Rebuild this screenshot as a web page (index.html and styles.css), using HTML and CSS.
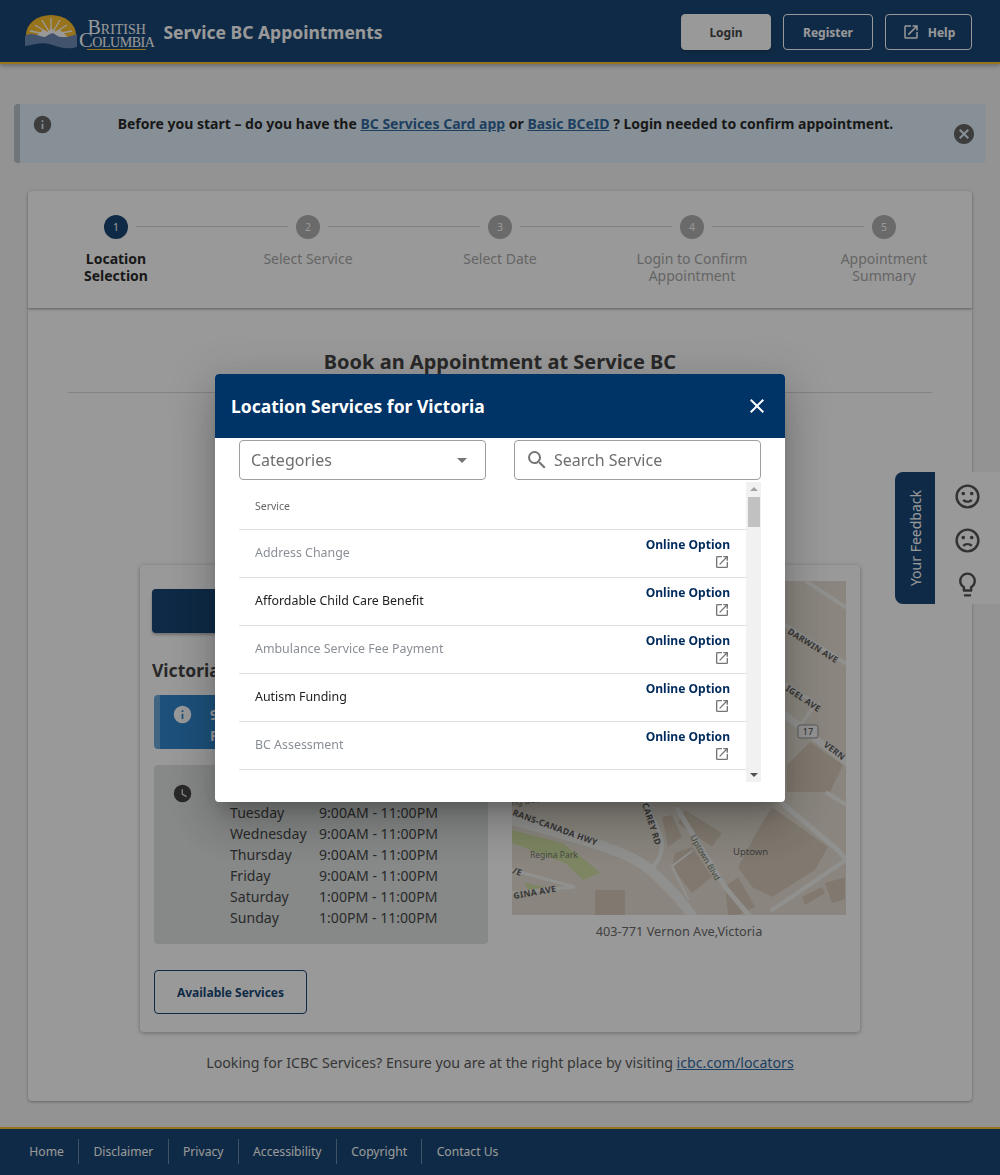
FILE: index.html
```html
<!DOCTYPE html>
<html lang="en">
<head>
  <meta charset="utf-8"/>
  <title>Service BC Appointments</title>
  <link rel="stylesheet" href="styles.css">
</head>
<body>

<svg class="defs" width="0" height="0">
  <symbol id="ext" viewBox="0 0 24 24"><path d="M14,3V5H17.59L7.76,14.83L9.17,16.24L19,6.41V10H21V3M19,19H5V5H12V3H5C3.89,3 3,3.9 3,5V19A2,2 0 0,0 5,21H19A2,2 0 0,0 21,19V12H19V19Z"/></symbol>
  <symbol id="info" viewBox="0 0 24 24"><path d="M13,9H11V7H13M13,17H11V11H13M12,2A10,10 0 0,0 2,12A10,10 0 0,0 12,22A10,10 0 0,0 22,12A10,10 0 0,0 12,2Z"/></symbol>
</svg>

<header class="topbar">
  <div class="logo">
    <svg class="logo-mark" width="52" height="34" viewBox="0 0 52 34">
      <path d="M1 20A25 20 0 0 1 51 20V24H1Z" fill="#fcba19"/>
      <g stroke="#fff" stroke-width="1.4">
        <path d="M26 20V3M26 20L17 5M26 20L35 5M26 20L10 10M26 20L42 10M26 20L5 16M26 20L47 16"/>
      </g>
      <path d="M10 22L18 15L23 17L26 13L31 17L35 15L43 22Z" fill="#fff"/>
      <path d="M0 21C8 16 14 22 20 22C24 20 27 16 31 20C36 24 44 22 52 19V32C42 35 34 32 24 29C16 27 8 30 0 31Z" fill="#5f7fae"/>
    </svg>
    <div class="logo-text">
      <span class="logo-line">British</span>
      <span class="logo-line logo-line-big">Columbia</span>
    </div>
  </div>
  <div class="app-title">Service BC Appointments</div>
  <nav class="top-actions">
    <button class="top-btn top-btn-fill">Login</button>
    <button class="top-btn">Register</button>
    <button class="top-btn top-btn-help">
      <svg class="icon" width="18" height="18"><use href="#ext"/></svg>
      Help
    </button>
  </nav>
</header>

<main class="page">
  <div class="notice">
    <svg class="icon notice-icon" width="21" height="21"><use href="#info"/></svg>
    <p class="notice-text">Before you start – do you have the <a href="#">BC Services Card app</a> or <a href="#">Basic BCeID</a> ? Login needed to confirm appointment.</p>
    <svg class="notice-close" width="24" height="24" viewBox="0 0 24 24"><path d="M12,2C17.53,2 22,6.47 22,12C22,17.53 17.53,22 12,22C6.47,22 2,17.53 2,12C2,6.47 6.47,2 12,2M15.59,7L12,10.59L8.41,7L7,8.41L10.59,12L7,15.59L8.41,17L12,13.41L15.59,17L17,15.59L13.41,12L17,8.41L15.59,7Z"/></svg>
  </div>

  <section class="stepper">
    <div class="step step-active"><span class="step-num">1</span><span class="step-label">Location Selection</span></div>
    <div class="step"><span class="step-num">2</span><span class="step-label">Select Service</span></div>
    <div class="step"><span class="step-num">3</span><span class="step-label">Select Date</span></div>
    <div class="step"><span class="step-num">4</span><span class="step-label">Login to Confirm Appointment</span></div>
    <div class="step step-last"><span class="step-num">5</span><span class="step-label">Appointment Summary</span></div>
  </section>

  <section class="content">
    <h1 class="page-title">Book an Appointment at Service BC</h1>
    <hr class="rule">

    <div class="location">
      <div class="location-left">
        <button class="select-btn"></button>
        <h2 class="location-name">Victoria</h2>
        <div class="status">
          <svg class="status-icon" width="21" height="21"><use href="#info"/></svg>
          <div class="status-text">9<br>P</div>
        </div>
        <div class="hours">
          <svg class="hours-icon" width="21" height="21" viewBox="0 0 24 24"><path d="M12,2A10,10 0 0,0 2,12A10,10 0 0,0 12,22A10,10 0 0,0 22,12A10,10 0 0,0 12,2M16.2,16.2L11,13V7H12.5V12.2L17,14.9L16.2,16.2Z"/></svg>
          <div class="hours-grid">
            <span>Monday</span><span>9:00AM - 11:00PM</span>
            <span>Tuesday</span><span>9:00AM - 11:00PM</span>
            <span>Wednesday</span><span>9:00AM - 11:00PM</span>
            <span>Thursday</span><span>9:00AM - 11:00PM</span>
            <span>Friday</span><span>9:00AM - 11:00PM</span>
            <span>Saturday</span><span>1:00PM - 11:00PM</span>
            <span>Sunday</span><span>1:00PM - 11:00PM</span>
          </div>
        </div>
        <button class="services-btn">Available Services</button>
      </div>
      <div class="location-right">
        <svg class="map" width="334" height="334" viewBox="0 0 334 334">
          <rect width="334" height="334" fill="#e3dccf"/>
          <g fill="#d2c4b2">
            <path d="M260 226L316 266L303 289L260 316L240 306L226 286L246 249Z"/>
            <path d="M173 229L210 252L200 266L166 242Z"/>
            <path d="M163 272L180 266L200 296L180 312L160 286Z"/>
            <path d="M213 306L226 296L243 326L226 334L216 334Z"/>
            <path d="M150 236L160 234L170 256L156 266Z"/>
            <path d="M83 309L113 309L113 334L83 334Z"/>
            <path d="M290 316L310 306L313 312L293 324Z"/>
            <path d="M313 302L333 296L333 318L320 322Z"/>
            <path d="M298 161L331 184L318 211L275 211L275 184Z"/>
          </g>
          <g fill="#cbdb9a">
            <path d="M0 249L50 262L73 279L88 292L71 299L53 282L26 272L0 262Z"/>
            <path d="M13 302L33 306L16 309Z"/>
          </g>
          <g fill="none" stroke="#eeeeec" stroke-linecap="round">
            <path d="M-4 238C40 250 70 258 93 266C115 274 130 280 146 296C160 310 172 322 182 338" stroke-width="10"/>
            <path d="M133 222C140 236 148 248 150 262C150 274 146 282 136 290" stroke-width="4"/>
            <path d="M166 229L213 306L240 338" stroke-width="5"/>
            <path d="M270 222L326 269L338 284" stroke-width="5"/>
            <path d="M334 279L260 329" stroke-width="4"/>
            <path d="M295 1L338 29" stroke-width="4"/>
            <path d="M273 44L338 85" stroke-width="4"/>
            <path d="M273 134L338 184" stroke-width="7"/>
            <path d="M303 124L290 142" stroke-width="3"/>
            <path d="M272 102L306 124" stroke-width="3"/>
            <path d="M315 212L338 226" stroke-width="4"/>
            <path d="M0 289L63 306L0 312" stroke-width="3"/>
            <path d="M180 270L160 285L176 318" stroke-width="2"/>
          </g>
          <g class="map-label">
            <text transform="translate(275 52) rotate(32)">DARWIN AVE</text>
            <text transform="translate(273 109) rotate(34)">IGEL AVE</text>
            <text transform="translate(311 165) rotate(37)">VERN</text>
            <text transform="translate(0 234) rotate(20)">RANS-CANADA HWY</text>
            <text transform="translate(130 223) rotate(72)">CAREY RD</text>
            <text transform="translate(2 318) rotate(-10)">GINA AVE</text>
            <text transform="translate(0 292) rotate(20)">/E</text>
          </g>
          <g class="map-place">
            <text x="18" y="277">Regina Park</text>
            <text x="221" y="274" class="map-place-big">Uptown</text>
            <text transform="translate(178 256) rotate(60)">Uptown Blvd</text>
            <text transform="translate(0 225) rotate(-8)">ng Goose Regional</text>
          </g>
          <rect x="286" y="144" width="20" height="13" rx="2" fill="#f4f4f4" stroke="#888"/>
          <text x="296" y="154" class="map-shield">17</text>
        </svg>
        <p class="address">403-771 Vernon Ave,Victoria</p>
      </div>
    </div>

    <p class="icbc">Looking for ICBC Services? Ensure you are at the right place by visiting <a href="#">icbc.com/locators</a></p>
  </section>
</main>

<footer class="footer">
  <a href="#">Home</a>
  <a href="#">Disclaimer</a>
  <a href="#">Privacy</a>
  <a href="#">Accessibility</a>
  <a href="#">Copyright</a>
  <a href="#">Contact Us</a>
</footer>

<aside class="feedback">
  <div class="feedback-tab"><span>Your Feedback</span></div>
  <div class="feedback-icons">
    <svg width="29" height="29" viewBox="0 0 24 24"><path d="M20,12A8,8 0 0,0 12,4A8,8 0 0,0 4,12A8,8 0 0,0 12,20A8,8 0 0,0 20,12M22,12A10,10 0 0,1 12,22A10,10 0 0,1 2,12A10,10 0 0,1 12,2A10,10 0 0,1 22,12M10,9.5C10,10.3 9.3,11 8.5,11C7.7,11 7,10.3 7,9.5C7,8.7 7.7,8 8.5,8C9.3,8 10,8.7 10,9.5M17,9.5C17,10.3 16.3,11 15.5,11C14.7,11 14,10.3 14,9.5C14,8.7 14.7,8 15.5,8C16.3,8 17,8.7 17,9.5M12,17.23C10.25,17.23 8.71,16.5 7.81,15.42L9.23,14C9.68,14.72 10.75,15.23 12,15.23C13.25,15.23 14.32,14.72 14.77,14L16.19,15.42C15.29,16.5 13.75,17.23 12,17.23Z"/></svg>
    <svg width="29" height="29" viewBox="0 0 24 24"><path d="M20,12A8,8 0 0,0 12,4A8,8 0 0,0 4,12A8,8 0 0,0 12,20A8,8 0 0,0 20,12M22,12A10,10 0 0,1 12,22A10,10 0 0,1 2,12A10,10 0 0,1 12,2A10,10 0 0,1 22,12M10,9.5C10,10.3 9.3,11 8.5,11C7.7,11 7,10.3 7,9.5C7,8.7 7.7,8 8.5,8C9.3,8 10,8.7 10,9.5M17,9.5C17,10.3 16.3,11 15.5,11C14.7,11 14,10.3 14,9.5C14,8.7 14.7,8 15.5,8C16.3,8 17,8.7 17,9.5M12,14C13.75,14 15.29,14.72 16.19,15.81L14.77,17.23C14.32,16.5 13.25,16 12,16C10.75,16 9.68,16.5 9.23,17.23L7.81,15.81C8.71,14.72 10.25,14 12,14Z"/></svg>
    <svg width="29" height="29" viewBox="0 0 24 24"><path d="M12,2A7,7 0 0,1 19,9C19,11.38 17.81,13.47 16,14.74V17A1,1 0 0,1 15,18H9A1,1 0 0,1 8,17V14.74C6.19,13.47 5,11.38 5,9A7,7 0 0,1 12,2M9,21V20H15V21A1,1 0 0,1 14,22H10A1,1 0 0,1 9,21M12,4A5,5 0 0,0 7,9C7,11.05 8.23,12.81 10,13.58V16H14V13.58C15.77,12.81 17,11.05 17,9A5,5 0 0,0 12,4Z"/></svg>
  </div>
</aside>

<div class="overlay">
  <div class="dialog">
    <div class="dialog-head">
      <h2 class="dialog-title">Location Services for Victoria</h2>
      <svg class="dialog-close" width="24" height="24" viewBox="0 0 24 24"><path d="M19,6.41L17.59,5L12,10.59L6.41,5L5,6.41L10.59,12L5,17.59L6.41,19L12,13.41L17.59,19L19,17.59L13.41,12L19,6.41Z"/></svg>
    </div>
    <div class="filters">
      <div class="field field-select">
        <span>Categories</span>
        <svg width="24" height="24" viewBox="0 0 24 24"><path d="M7,10L12,15L17,10H7Z"/></svg>
      </div>
      <div class="field field-search">
        <svg width="24" height="24" viewBox="0 0 24 24"><path d="M9.5,3A6.5,6.5 0 0,1 16,9.5C16,11.11 15.41,12.59 14.44,13.73L14.71,14H15.5L20.5,19L19,20.5L14,15.5V14.71L13.73,14.44C12.59,15.41 11.11,16 9.5,16A6.5,6.5 0 0,1 3,9.5A6.5,6.5 0 0,1 9.5,3M9.5,5C7,5 5,7 5,9.5C5,12 7,14 9.5,14C12,14 14,12 14,9.5C14,7 12,5 9.5,5Z"/></svg>
        <span>Search Service</span>
      </div>
    </div>
    <div class="service-list">
      <table class="service-table">
        <tr><th colspan="2">Service</th></tr>
        <tr class="row-off">
          <td>Address Change</td>
          <td class="online">Online Option<svg width="16" height="16"><use href="#ext"/></svg></td>
        </tr>
        <tr>
          <td>Affordable Child Care Benefit</td>
          <td class="online">Online Option<svg width="16" height="16"><use href="#ext"/></svg></td>
        </tr>
        <tr class="row-off">
          <td>Ambulance Service Fee Payment</td>
          <td class="online">Online Option<svg width="16" height="16"><use href="#ext"/></svg></td>
        </tr>
        <tr>
          <td>Autism Funding</td>
          <td class="online">Online Option<svg width="16" height="16"><use href="#ext"/></svg></td>
        </tr>
        <tr class="row-off">
          <td>BC Assessment</td>
          <td class="online">Online Option<svg width="16" height="16"><use href="#ext"/></svg></td>
        </tr>
      </table>
      <div class="scrollbar">
        <span class="scroll-up"></span>
        <span class="scroll-thumb"></span>
        <span class="scroll-down"></span>
      </div>
    </div>
  </div>
</div>

</body>
</html>
```

FILE: styles.css
```css
* {
  box-sizing: border-box;
}
body {
  margin: 0;
  min-height: 1175px;
  display: flex;
  flex-direction: column;
  background: #f4f4f4;
  color: #313132;
  font-family: "Noto Sans", sans-serif;
  font-size: 14px;
}
a {
  color: #1a5a96;
}
p, h1, h2 {
  margin: 0;
}
button {
  font-family: inherit;
  cursor: pointer;
}
.defs {
  position: absolute;
}
.icon {
  fill: currentColor;
}

/* header */
.topbar {
  height: 64px;
  display: flex;
  align-items: center;
  padding: 2px 28px 0 25px;
  background: #003366;
  border-bottom: 2px solid #fcba19;
  box-shadow: 0 2px 4px rgba(0,0,0,.3);
  color: #fff;
}
.logo {
  display: flex;
  align-items: center;
  gap: 2px;
}
.logo-text {
  display: flex;
  flex-direction: column;
  align-items: center;
  padding-top: 7px;
  font-family: "Liberation Serif", serif;
  font-variant: small-caps;
  font-size: 20px;
  line-height: 13px;
}
.logo-line-big {
  font-size: 20.5px;
  letter-spacing: -.45px;
}
.logo-text::after {
  content: "";
  width: 59px;
  height: 1px;
  margin-top: 2px;
  background: #fcba19;
}
.app-title {
  margin-left: 9px;
  font-size: 17.5px;
  font-weight: 700;
}
.top-actions {
  margin-left: auto;
  display: flex;
  gap: 12px;
}
.top-btn {
  width: 90px;
  height: 36px;
  background: transparent;
  color: #fff;
  border: 1px solid #fff;
  border-radius: 4px;
  font-size: 12px;
  font-weight: 700;
}
.top-btn-fill {
  background: #fff;
  color: #313132;
  box-shadow: 0 2px 3px rgba(0,0,0,.25);
}
.top-btn-help {
  width: 87px;
  display: flex;
  align-items: center;
  justify-content: center;
  gap: 8px;
}

/* notice */
.page {
  flex: 1;
  padding: 40px 14px 26px;
}
.notice {
  height: 59px;
  display: flex;
  align-items: flex-start;
  padding: 10px 10px 0 12px;
  background: #deeefa;
  border-left: 6px solid #b4bcc4;
  border-radius: 4px;
  margin-bottom: 28px;
}
.notice-icon {
  color: #555;
}
.notice-text {
  flex: 1;
  margin-left: 6px;
  text-align: center;
  font-weight: 700;
  line-height: 20px;
  color: #111;
}
.notice-text a {
  color: #1a5a96;
}
.notice-close {
  margin-top: 8px;
  fill: #555;
}

/* stepper */
.stepper {
  position: relative;
  z-index: 1;
  margin: 0 14px;
  height: 117px;
  display: flex;
  justify-content: space-between;
  padding: 24px 8px 0;
  background: #fff;
  border-radius: 4px 4px 0 0;
  box-shadow: 0 1px 3px rgba(0,0,0,.45);
}
.step {
  position: relative;
  width: 160px;
  display: flex;
  flex-direction: column;
  align-items: center;
  color: #a0a0a0;
  text-align: center;
}
.step::after {
  content: "";
  position: absolute;
  top: 11px;
  left: 100px;
  width: 152px;
  height: 1px;
  background: #d2d2d2;
}
.step-last::after {
  display: none;
}
.step-num {
  width: 24px;
  height: 24px;
  border-radius: 50%;
  background: #a8a8a8;
  color: #fff;
  font-size: 10.5px;
  line-height: 24px;
}
.step-label {
  margin-top: 11px;
  width: 130px;
  font-size: 14px;
  line-height: 17px;
}
.step-active {
  color: #111;
}
.step-active .step-num {
  background: #003366;
}
.step-active .step-label {
  width: 90px;
  font-weight: 700;
}

/* content */
.content {
  margin: 0 14px;
  padding: 40px 40px 28px;
  height: 793px;
  background: #fff;
  border-radius: 0 0 4px 4px;
  box-shadow: 0 1px 3px rgba(0,0,0,.35);
}
.page-title {
  text-align: center;
  font-size: 20px;
  line-height: 28px;
  font-weight: 700;
}
.rule {
  margin: 16px 0 0;
  border: 0;
  border-top: 1px solid #d6d6d6;
}
.location {
  margin: 172px 72px 0;
  height: 467px;
  display: flex;
  gap: 12px;
  padding: 16px 14px 18px 12px;
  background: #fff;
  border-radius: 4px;
  box-shadow: 0 1px 4px rgba(0,0,0,.35);
}
.location-left {
  width: 348px;
  padding-top: 8px;
}
.select-btn {
  display: block;
  width: 338px;
  height: 44px;
  background: #003366;
  border: 0;
  border-radius: 4px;
  box-shadow: 0 2px 3px rgba(0,0,0,.3);
}
.location-name {
  margin-top: 24px;
  font-size: 17.5px;
  line-height: 26px;
  font-weight: 700;
}
.status {
  margin: 12px 0 0 2px;
  width: 334px;
  height: 54px;
  display: flex;
  padding: 9px 0 0 12px;
  background: #1a7ac8;
  border-left: 6px solid #5a9fd4;
  border-radius: 4px;
  color: #fff;
  font-weight: 700;
  line-height: 21px;
}
.status-icon {
  fill: #fff;
}
.status-text {
  margin-left: 17px;
}
.hours {
  margin: 16px 0 0 2px;
  width: 334px;
  height: 179px;
  display: flex;
  padding: 16px 0 0 18px;
  background: #dde1df;
  border-radius: 4px;
}
.hours-icon {
  margin-top: 2px;
  fill: #313132;
}
.hours-grid {
  align-self: flex-start;
  margin-left: 37px;
  display: grid;
  grid-template-columns: 89px auto;
  line-height: 21px;
  font-size: 14.1px;
}
.services-btn {
  display: block;
  margin: 26px 0 0 2px;
  width: 153px;
  height: 44px;
  background: transparent;
  border: 1px solid #003366;
  border-radius: 4px;
  color: #003366;
  font-size: 12px;
  font-weight: 700;
}
.location-right {
  width: 334px;
}
.map {
  display: block;
}
.map-label text {
  font-size: 8.6px;
  font-weight: 700;
  fill: #4a4a4a;
  letter-spacing: .3px;
}
.map-place text {
  font-size: 8.5px;
  fill: #66705c;
}
.map-place .map-place-big {
  font-size: 9.5px;
  fill: #555;
}
.map-shield {
  font-size: 9px;
  text-anchor: middle;
  fill: #333;
}
.address {
  margin-top: 7px;
  text-align: center;
  font-size: 12.7px;
  line-height: 18px;
  color: #5a5a5a;
}
.icbc {
  margin-top: 20px;
  text-align: center;
  font-size: 14.2px;
  line-height: 22px;
  color: #494949;
}

/* footer */
.footer {
  height: 48px;
  display: flex;
  align-items: center;
  padding: 0 0 2px 15px;
  background: #003366;
  border-top: 2px solid #fcba19;
}
.footer a {
  padding: 0 14.3px;
  line-height: 25px;
  border-left: 1px solid #5b7ea3;
  color: #fff;
  font-size: 12.15px;
  text-decoration: none;
}
.footer a:first-child {
  border-left: 0;
}

/* feedback */
.feedback {
  position: fixed;
  top: 472px;
  right: 0;
  width: 105px;
  height: 132px;
  display: flex;
}
.feedback-tab {
  width: 40px;
  display: flex;
  align-items: center;
  justify-content: center;
  background: #003366;
  border-radius: 8px 0 0 8px;
  color: #fff;
}
.feedback-tab span {
  writing-mode: vertical-rl;
  transform: rotate(180deg);
  font-size: 14px;
}
.feedback-icons {
  flex: 1;
  display: flex;
  flex-direction: column;
  align-items: center;
  padding-top: 10px;
  gap: 15px;
  background: #fff;
}
.feedback-icons svg {
  fill: #424242;
}

/* dialog */
.overlay {
  position: fixed;
  z-index: 5;
  inset: 0;
  display: flex;
  align-items: center;
  justify-content: center;
  background: rgba(33,33,33,.46);
}
.dialog {
  width: 570px;
  height: 428px;
  background: #fff;
  border-radius: 4px;
  overflow: hidden;
  box-shadow: 0 11px 15px -7px rgba(0,0,0,.2), 0 24px 38px 3px rgba(0,0,0,.14), 0 9px 46px 8px rgba(0,0,0,.12);
}
.dialog-head {
  height: 64px;
  display: flex;
  align-items: center;
  justify-content: space-between;
  padding: 0 16px;
  background: #003366;
}
.dialog-title {
  color: #fff;
  font-size: 17.5px;
  font-weight: 700;
}
.dialog-close {
  fill: #fff;
}
.filters {
  display: flex;
  gap: 28px;
  padding: 2px 24px 0;
}
.field {
  width: 247px;
  height: 40px;
  display: flex;
  align-items: center;
  border: 1px solid #9e9e9e;
  border-radius: 4px;
  color: #6e6e6e;
  font-size: 16px;
}
.field svg {
  fill: #757575;
}
.field-select {
  justify-content: space-between;
  padding: 0 11px;
}
.field-search {
  gap: 5px;
  padding-left: 10px;
}
.service-list {
  margin: 2px 24px 0;
  height: 300px;
  display: flex;
  align-items: flex-start;
}
.service-table {
  flex: 1;
  border-collapse: separate;
  border-spacing: 0;
}
.service-table th, .service-table td {
  height: 48px;
  padding: 0 16px;
  border-bottom: 1px solid #e0e0e0;
  text-align: left;
  font-size: 12.4px;
  font-weight: 400;
  color: #212121;
}
.service-table th {
  padding-top: 2px;
  font-size: 10.5px;
  color: #666;
}
.service-table td:first-child {
  padding-bottom: 2px;
}
.row-off td:first-child {
  color: #8a8f96;
}
.service-table .online {
  text-align: right;
  font-size: 12.1px;
  line-height: 16px;
  font-weight: 700;
  color: #002b5c;
}
.online svg {
  display: block;
  margin: 1px 0 0 auto;
  fill: #757575;
}
.scrollbar {
  width: 15px;
  height: 300px;
  display: flex;
  flex-direction: column;
  align-items: center;
  background: #f1f1f1;
}
.scroll-up, .scroll-down {
  width: 0;
  height: 0;
  border-left: 4px solid transparent;
  border-right: 4px solid transparent;
}
.scroll-up {
  margin-top: 5px;
  border-bottom: 4px solid #a3a3a3;
}
.scroll-thumb {
  width: 12px;
  height: 30px;
  margin-top: 6px;
  background: #c1c1c1;
}
.scroll-down {
  margin-top: auto;
  margin-bottom: 5px;
  border-top: 4px solid #505050;
}
```
